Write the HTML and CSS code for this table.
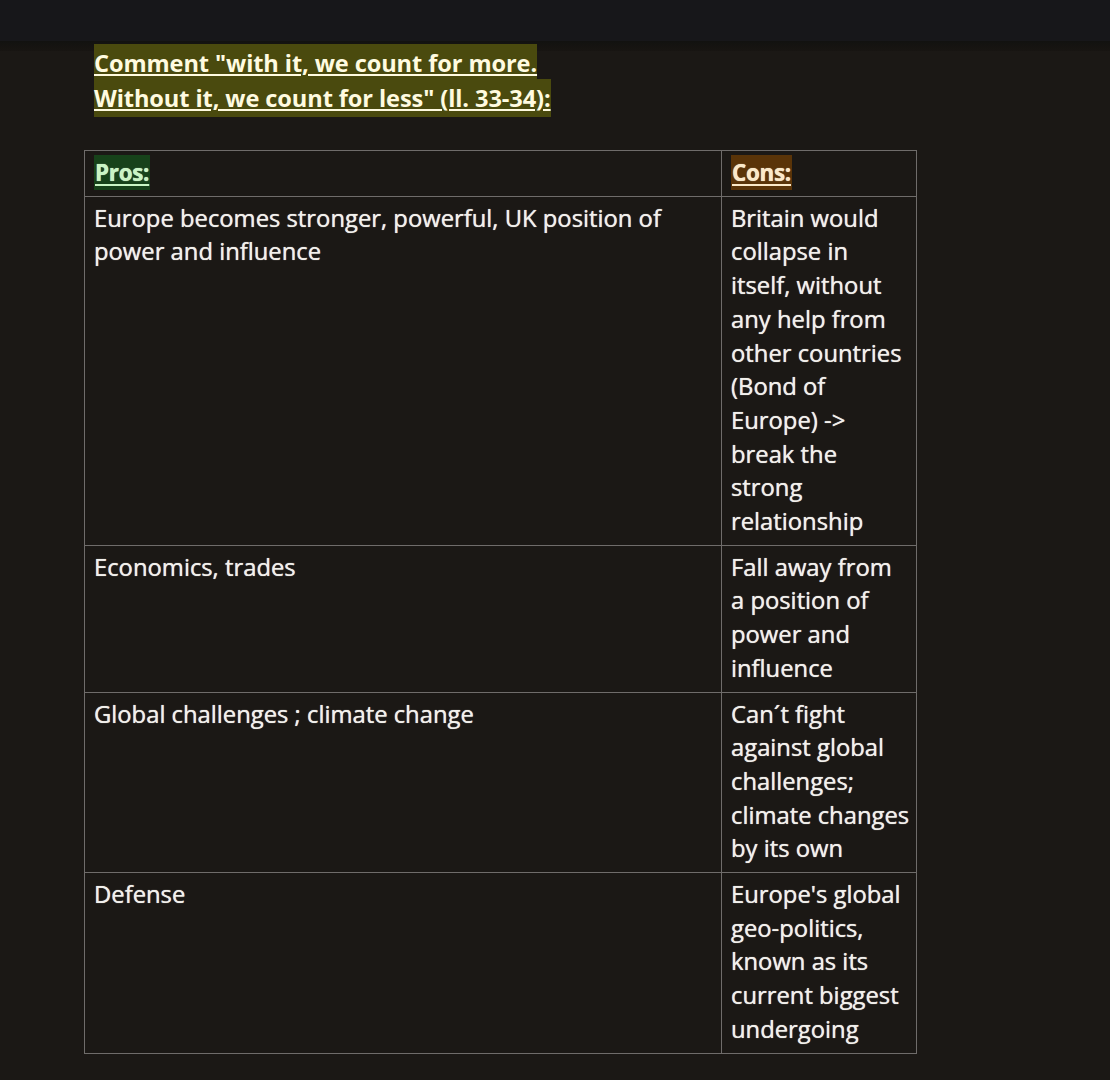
FILE: index.html
```html
<!DOCTYPE html>
<html>
<head>
<meta charset="utf-8">
<link rel="stylesheet" href="styles.css">
</head>
<body>
<div class="topbar"></div>
<div class="shade"></div>
<main class="page">
  <h1 class="heading">
    <span class="hl">Comment "with it, we count for more.</span><br>
    <span class="hl">Without it, we count for less" (ll. 33-34):</span>
  </h1>
  <table class="grid">
    <colgroup><col class="c-pros"><col class="c-cons"></colgroup>
    <tr class="head">
      <td><span class="tag pros">Pros:</span></td>
      <td><span class="tag cons">Cons:</span></td>
    </tr>
    <tr class="r1">
      <td>Europe becomes stronger, powerful, UK position of<br>power and influence</td>
      <td>Britain would<br>collapse in<br>itself, without<br>any help from<br>other countries<br>(Bond of<br>Europe) -&gt;<br>break the<br>strong<br>relationship</td>
    </tr>
    <tr class="r2">
      <td>Economics, trades</td>
      <td>Fall away from<br>a position of<br>power and<br>influence</td>
    </tr>
    <tr class="r3">
      <td>Global challenges ; climate change</td>
      <td>Can´t fight<br>against global<br>challenges;<br>climate changes<br>by its own</td>
    </tr>
    <tr class="r4">
      <td>Defense</td>
      <td>Europe's global<br>geo-politics,<br>known as its<br>current biggest<br>undergoing</td>
    </tr>
  </table>
</main>
</body>
</html>
```
FILE: styles.css
```css
html, body {
  margin: 0;
  padding: 0;
  background: #1b1815;
}
body {
  font-family: "Open Sans", Lato, "Liberation Sans", sans-serif;
  color: #f2f0ec;
  width: 1110px;
  height: 1080px;
  overflow: hidden;
}
.topbar {
  height: 41px;
  background: #17171a;
}
.shade {
  height: 10px;
  background: linear-gradient(#121210, #181512);
}
.page {
  padding-left: 84px;
}
.heading {
  margin: -5px 0 0 0;
  padding-left: 10px;
  font-size: 23.6px;
  font-weight: 700;
  line-height: 35px;
  color: #fffbe0;
  letter-spacing: -0.1px;
}
.hl {
  background: #4a4a0e;
  text-decoration: underline;
  text-decoration-thickness: 2px;
  text-underline-offset: 2px;
  padding: 3px 0;
}
.grid {
  margin-top: 34px;
  border-collapse: collapse;
  width: 832px;
  table-layout: fixed;
}
.c-pros { width: 637px; }
.c-cons { width: 195px; }
.grid td {
  border: 1px solid #6f6c6a;
  vertical-align: top;
  padding: 5px 4px 6px 9px;
  font-size: 23.8px;
  line-height: 33.7px;
  letter-spacing: 0;
  white-space: nowrap;
  text-shadow: 0 0 0.8px #f2f0ec;
}
.tag {
  font-weight: 700;
  font-size: 22.4px;
  text-decoration: underline;
  text-decoration-thickness: 2px;
  text-underline-offset: 3px;
  padding: 2px 1px;
  letter-spacing: -0.3px;
}
.pros {
  background: #17421a;
  color: #c9f5c4;
}
.cons {
  background: #5a3408;
  color: #fbe9c8;
}
```
